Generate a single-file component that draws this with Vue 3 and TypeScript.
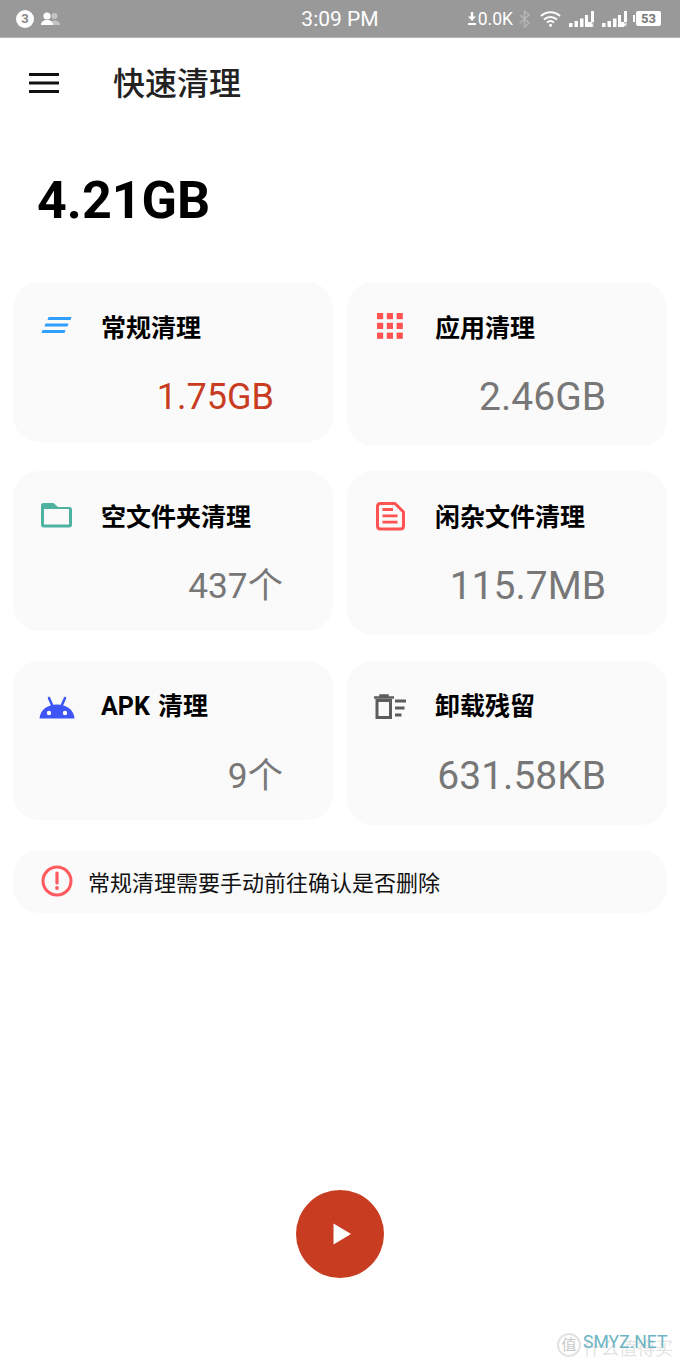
<script setup lang="ts">
type CleanItem = {
  title: string;
  value: string;
  icon: string;
  red?: boolean;
  big?: boolean;
  count?: boolean;
};

const items: CleanItem[] = [
  { title: "常规清理", value: "1.75GB", icon: "list", red: true },
  { title: "应用清理", value: "2.46GB", icon: "apps", big: true },
  { title: "空文件夹清理", value: "437个", icon: "folder", count: true },
  { title: "闲杂文件清理", value: "115.7MB", icon: "doc", big: true },
  { title: "APK 清理", value: "9个", icon: "android", count: true },
  { title: "卸载残留", value: "631.58KB", icon: "trash", big: true },
];

const appDots = [0, 1, 2];
</script>

<template>
  <div class="page">
    <header class="status-bar">
      <div class="status-left">
        <span class="badge">3</span>
        <svg width="22" height="14" viewBox="0 0 22 14">
          <circle cx="14.5" cy="4" r="3" fill="#c4c4c4" />
          <path d="M9 13c0-3 2.500-4.500 5.500-4.500S20 10 20 13z" fill="#c4c4c4" />
          <circle cx="7" cy="4" r="3.600" fill="#fff" />
          <path d="M1 13c0-3.500 2.600-5 6-5s6 1.500 6 5z" fill="#fff" />
        </svg>
      </div>
      <span class="time">3:09 PM</span>
      <div class="status-right">
        <svg width="8" height="13" viewBox="0 0 8 13">
          <path d="M2.800 0h2.400v4.500H8L4 9 0 4.500h2.800zM0 11h8v2H0z" fill="#fff" />
        </svg>
        <span class="speed">0.0K</span>
        <svg class="bt" width="12" height="18" viewBox="0 0 12 18">
          <path d="M1 5l9 8-4.500 4V1L10 5l-9 8" fill="none" stroke="#b4b4b4" stroke-width="1.600" />
        </svg>
        <svg class="wifi" width="21" height="17" viewBox="0 0 21 17">
          <path d="M1 6c5.500-5 13.500-5 19 0M4 9.500c3.700-3.300 9.300-3.300 13 0M7 12.500c2-1.700 5-1.700 7 0" fill="none" stroke="#fff" stroke-width="2" />
          <circle cx="10.500" cy="15.200" r="1.500" fill="#fff" />
        </svg>
        <svg v-for="n in 2" :key="n" class="signal" width="25" height="16" viewBox="0 0 25 16">
          <rect x="0" y="12" width="3.500" height="4" fill="#fff" />
          <rect x="5.500" y="10" width="3.500" height="6" fill="#fff" />
          <rect x="11" y="7.500" width="3.500" height="8.500" fill="#fff" />
          <rect x="16" y="4" width="3" height="12" fill="#fff" />
          <path d="M22 0h3v16h-6v-5h3z" fill="#fff" />
          <text x="21.800" y="15.500" class="sim">{{ n }}</text>
        </svg>
        <div class="battery">53</div>
      </div>
    </header>

    <div class="app-bar">
      <svg width="32" height="22" viewBox="0 0 32 22">
        <path d="M1 2.500h30M1 11h30M1 19.500h30" stroke="#111" stroke-width="3" />
      </svg>
      <h1>快速清理</h1>
    </div>

    <div class="total">4.21GB</div>

    <section class="grid">
      <div
        v-for="item in items"
        :key="item.title"
        class="card"
        :class="{ big: item.big }"
      >
        <div class="card-head">
          <svg class="icon" width="36" height="36" viewBox="0 0 36 36">
            <g v-if="item.icon === 'list'" fill="#2f9ffb">
              <path d="M9.500 8h23l-1 3h-23z" />
              <path d="M6.500 14.500h23l-1 3h-23z" />
              <path d="M3.500 21h23l-1 3h-23z" />
            </g>
            <g v-else-if="item.icon === 'apps'" fill="#ff5252">
              <template v-for="r in appDots" :key="r">
                <rect v-for="c in appDots" :key="c" :x="4 + c * 9.800" :y="4 + r * 9.800" width="6.200" height="6.200" />
              </template>
            </g>
            <path
              v-else-if="item.icon === 'folder'"
              d="M4.500 5h10l4.500 4h11.500c1.500 0 2.500 1 2.500 2.500V27c0 1.500-1 2.500-2.500 2.500H4.500C3 29.500 2 28.500 2 27V7.500C2 6 3 5 4.500 5zM5 11v15.500h25V11z"
              fill="#4db2a0"
              fill-rule="evenodd"
            />
            <g v-else-if="item.icon === 'doc'">
              <path
                d="M7.500 5.500h14.500l8.500 8.500v14c0 2-1 3-3 3H7.500c-2 0-3-1-3-3V8.500c0-2 1-3 3-3z"
                fill="none"
                stroke="#ff5252"
                stroke-width="3"
                stroke-linejoin="round"
              />
              <path d="M9.500 11.500h10.500M9.500 17.800h15M9.500 24.200h15" stroke="#ff5252" stroke-width="2.800" />
            </g>
            <g v-else-if="item.icon === 'android'">
              <path d="M0.500 30.500c.5-8.500 8-14 17.500-14s17 5.500 17.500 14z" fill="#3d55f6" />
              <path d="M10 10l3.500 8M26 10l-3.500 8" stroke="#3d55f6" stroke-width="2.500" stroke-linecap="round" />
              <circle cx="10" cy="25" r="2.200" fill="#fff" />
              <circle cx="26" cy="25" r="2.200" fill="#fff" />
            </g>
            <g v-else fill="none" stroke="#5c5c5c">
              <path d="M1 9.500h20M7.500 9.500V7.500h7v2" stroke-width="2.500" />
              <rect x="4" y="12.500" width="13.500" height="17" stroke-width="3" />
              <path d="M22 13h11M22 20h9.500M22 27h6.500" stroke-width="3" />
            </g>
          </svg>
          <span class="card-title">{{ item.title }}</span>
        </div>
        <div class="value" :class="{ red: item.red, big: item.big, count: item.count }">
          {{ item.value }}
        </div>
      </div>
    </section>

    <div class="notice">
      <svg width="32" height="32" viewBox="0 0 32 32">
        <circle cx="16" cy="16" r="14" fill="none" stroke="#ff5a5f" stroke-width="3" />
        <path d="M16 8v10" stroke="#ff5a5f" stroke-width="3.200" stroke-linecap="round" />
        <circle cx="16" cy="23" r="1.900" fill="#ff5a5f" />
      </svg>
      <span>常规清理需要手动前往确认是否删除</span>
    </div>

    <div class="action">
      <button class="play" type="button" aria-label="开始">
        <svg width="18" height="22" viewBox="0 0 18 22">
          <path d="M0.500 0.500L18 11 0.500 21.500z" fill="#fff" />
        </svg>
      </button>
    </div>

    <div class="watermark">
      <span class="wm-circle">值</span>
      <span class="wm-cn">什么值得买</span>
      <span class="wm-en">SMYZ.NET</span>
    </div>
  </div>
</template>

<style>
html,
body {
  margin: 0;
  background: #fff;
}
</style>

<style scoped>
.page {
  position: relative;
  display: flex;
  flex-direction: column;
  width: 680px;
  height: 1360px;
  overflow: hidden;
  background: #fff;
  font-family: Roboto, "Noto Sans CJK SC", sans-serif;
}

.status-bar {
  display: grid;
  grid-template-columns: 1fr auto 1fr;
  align-items: center;
  box-sizing: border-box;
  height: 38px;
  padding: 0 19px 0 16px;
  border-bottom: 1px solid #b5b5b5;
  background: #999;
  color: #fff;
}

.status-left,
.status-right {
  display: flex;
  align-items: center;
}

.status-left {
  gap: 6px;
}

.status-right {
  justify-content: flex-end;
}

.badge {
  display: flex;
  align-items: center;
  justify-content: center;
  width: 18px;
  height: 18px;
  border-radius: 50%;
  background: #fff;
  color: #888;
  font-size: 13px;
  font-weight: 700;
}

.time {
  margin-left: 3px;
  font-size: 21px;
}

.speed {
  margin-left: 2px;
  font-size: 17.5px;
}

.bt {
  margin-left: 6px;
}

.wifi {
  margin-left: 9px;
}

.signal {
  margin-left: 8px;
}

.sim {
  fill: #999;
  font-size: 8px;
  font-weight: 700;
}

.battery {
  position: relative;
  box-sizing: border-box;
  width: 25px;
  height: 15px;
  margin-left: 9px;
  border-radius: 2px;
  background: #fff;
  color: #777;
  font-size: 13px;
  font-weight: 700;
  line-height: 15px;
  text-align: center;
}

.battery::before {
  content: "";
  position: absolute;
  top: 4px;
  left: -3px;
  width: 2px;
  height: 7px;
  background: #fff;
}

.app-bar {
  display: flex;
  align-items: center;
  height: 90px;
  padding-left: 28px;
}

.app-bar h1 {
  margin: 0 0 5px 53px;
  color: #222;
  font-size: 32px;
  font-weight: 500;
}

.total {
  margin: 46px 0 0 37px;
  color: #000;
  font-size: 52px;
  font-weight: 700;
  line-height: 54px;
}

.grid {
  display: grid;
  grid-template-columns: 320px 320px;
  column-gap: 14px;
  row-gap: 25.3px;
  align-items: start;
  margin: 54px 13px 0;
}

.card {
  padding: 27px 0 22.5px 26px;
  border-radius: 26px;
  background: #fafafa;
}

.card.big {
  padding-bottom: 27px;
}

.card-head {
  display: flex;
  align-items: center;
  height: 36px;
}

.icon {
  flex-shrink: 0;
}

.card-title {
  margin: 0 0 3px 26px;
  color: #000;
  font-size: 25px;
  font-weight: 700;
  word-spacing: 2px;
}

.value {
  margin-top: 30px;
  padding-right: 59px;
  color: #777;
  font-size: 36px;
  line-height: 44px;
  text-align: right;
}

.value.big {
  padding-right: 61px;
  font-size: 39px;
}

.value.count {
  padding-right: 50px;
  font-size: 35.3px;
}

.value.red {
  color: #c83c22;
}

.notice {
  display: flex;
  align-items: center;
  gap: 15px;
  height: 63px;
  margin: 25.4px 13px 0;
  padding-left: 28px;
  border-radius: 26px;
  background: #fafafa;
  color: #111;
  font-size: 22px;
}

.action {
  display: flex;
  justify-content: center;
  margin-top: auto;
  padding-bottom: 82px;
}

.play {
  display: flex;
  align-items: center;
  justify-content: center;
  width: 88px;
  height: 88px;
  padding: 0 0 0 3px;
  border: none;
  border-radius: 50%;
  background: #c83c22;
}

.watermark {
  position: absolute;
  right: 4px;
  bottom: 0;
  width: 122px;
  height: 32px;
}

.wm-circle {
  position: absolute;
  top: 5px;
  left: 3px;
  width: 20px;
  height: 20px;
  border: 2px solid #e3e3e3;
  border-radius: 50%;
  color: #c8c8c8;
  font-size: 15px;
  line-height: 20px;
  text-align: center;
}

.wm-cn {
  position: absolute;
  top: 11px;
  left: 29px;
  color: #e4e4e4;
  font-size: 18px;
  line-height: 20px;
  white-space: nowrap;
}

.wm-en {
  position: absolute;
  top: 4px;
  left: 29px;
  color: #6db4c4;
  font-size: 17.6px;
  line-height: 20px;
  white-space: nowrap;
}
</style>
